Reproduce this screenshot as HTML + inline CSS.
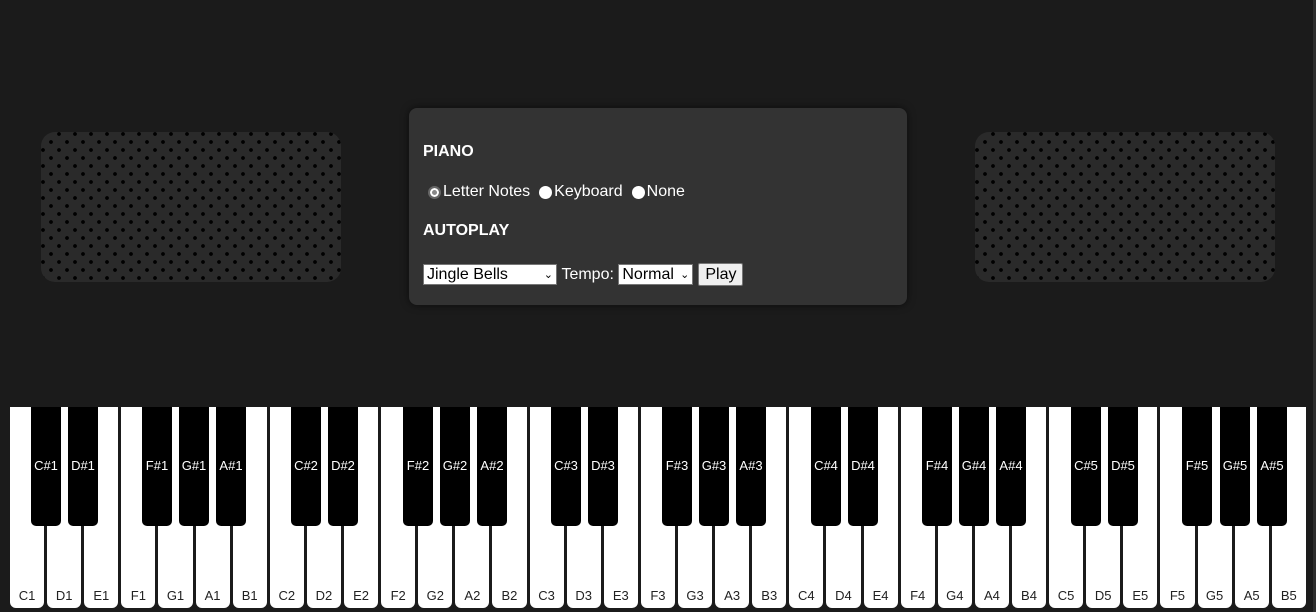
<!DOCTYPE html>
<html><head><meta charset="utf-8"><style>
*{box-sizing:border-box;margin:0;padding:0}
html,body{width:1316px;height:612px;overflow:hidden}
body{background:#1b1b1b;font-family:"Liberation Sans",Arial,sans-serif;position:relative;border-right:3px solid #2e2e2e}
.spk{position:absolute;top:132px;width:300px;height:150px;border-radius:14px;background-color:#2a2a2a;
background-image:radial-gradient(circle,#000 1.6px,transparent 2.2px),radial-gradient(circle,#000 1.6px,transparent 2.2px);
background-size:16px 16px,16px 16px;background-position:2px 2px,10px 10px}
.panel{position:absolute;left:409px;top:108px;width:498px;height:197px;background:#333;border-radius:8px;box-shadow:0 0 8px rgba(0,0,0,.6);color:#fff}
h3{position:absolute;left:14px;font-size:16px;font-weight:bold}
.row{position:absolute;left:14px;font-size:16px;display:flex;align-items:center;white-space:nowrap}
.rad{display:inline-block;width:13px;height:13px;border-radius:50%;background:#fff;margin:0 2px 0 5px}
.rad.on{border:2px solid #666;box-shadow:inset 0 0 0 2px #fff;background:#888}
.sel{background:#fff;color:#000;border:1px solid #767676;height:21px;display:inline-flex;align-items:center;padding:0 3px;justify-content:space-between}
.btn{background:#efefef;color:#000;border:1px solid #767676;border-radius:2px;height:23px;padding:0 6px;display:inline-flex;align-items:center;margin-left:5px}
.keys{position:absolute;left:10px;top:407px;width:1296px;height:201px;display:flex;gap:3px}
.w{flex:1;background:#fff;border-radius:0 0 6px 6px;position:relative;font-size:13px;color:#222;text-align:center}
.w span{position:absolute;bottom:5px;left:0;right:0}
.b{position:absolute;top:407px;width:30px;height:119px;background:#000;border-radius:0 0 5px 5px;color:#fff;font-size:13px;text-align:center;padding-top:51px}
</style></head><body>
<div class="spk" style="left:41px"></div>
<div class="spk" style="left:975px"></div>
<div class="panel">
<h3 style="top:35px">PIANO</h3>
<div class="row" style="top:75px"><span class="rad on"></span>Letter Notes<span class="rad" style="margin-left:9px"></span>Keyboard<span class="rad" style="margin-left:9px"></span>None</div>
<h3 style="top:114px">AUTOPLAY</h3>
<div class="row" style="top:155px"><span class="sel" style="width:134px">Jingle Bells<span style="font-size:11px">⌄</span></span>&nbsp;Tempo:&nbsp;<span class="sel" style="width:75px">Normal<span style="font-size:11px">⌄</span></span><span class="btn">Play</span></div>
</div>
<div class="keys">
<div class="w"><span>C1</span></div><div class="w"><span>D1</span></div><div class="w"><span>E1</span></div><div class="w"><span>F1</span></div><div class="w"><span>G1</span></div><div class="w"><span>A1</span></div><div class="w"><span>B1</span></div>
<div class="w"><span>C2</span></div><div class="w"><span>D2</span></div><div class="w"><span>E2</span></div><div class="w"><span>F2</span></div><div class="w"><span>G2</span></div><div class="w"><span>A2</span></div><div class="w"><span>B2</span></div>
<div class="w"><span>C3</span></div><div class="w"><span>D3</span></div><div class="w"><span>E3</span></div><div class="w"><span>F3</span></div><div class="w"><span>G3</span></div><div class="w"><span>A3</span></div><div class="w"><span>B3</span></div>
<div class="w"><span>C4</span></div><div class="w"><span>D4</span></div><div class="w"><span>E4</span></div><div class="w"><span>F4</span></div><div class="w"><span>G4</span></div><div class="w"><span>A4</span></div><div class="w"><span>B4</span></div>
<div class="w"><span>C5</span></div><div class="w"><span>D5</span></div><div class="w"><span>E5</span></div><div class="w"><span>F5</span></div><div class="w"><span>G5</span></div><div class="w"><span>A5</span></div><div class="w"><span>B5</span></div>
</div>
<div class="b" style="left:31px">C#1</div><div class="b" style="left:68px">D#1</div><div class="b" style="left:142px">F#1</div><div class="b" style="left:179px">G#1</div><div class="b" style="left:216px">A#1</div>
<div class="b" style="left:291px">C#2</div><div class="b" style="left:328px">D#2</div><div class="b" style="left:403px">F#2</div><div class="b" style="left:440px">G#2</div><div class="b" style="left:477px">A#2</div>
<div class="b" style="left:551px">C#3</div><div class="b" style="left:588px">D#3</div><div class="b" style="left:662px">F#3</div><div class="b" style="left:699px">G#3</div><div class="b" style="left:736px">A#3</div>
<div class="b" style="left:811px">C#4</div><div class="b" style="left:848px">D#4</div><div class="b" style="left:922px">F#4</div><div class="b" style="left:959px">G#4</div><div class="b" style="left:996px">A#4</div>
<div class="b" style="left:1071px">C#5</div><div class="b" style="left:1108px">D#5</div><div class="b" style="left:1182px">F#5</div><div class="b" style="left:1220px">G#5</div><div class="b" style="left:1257px">A#5</div>
</body></html>
